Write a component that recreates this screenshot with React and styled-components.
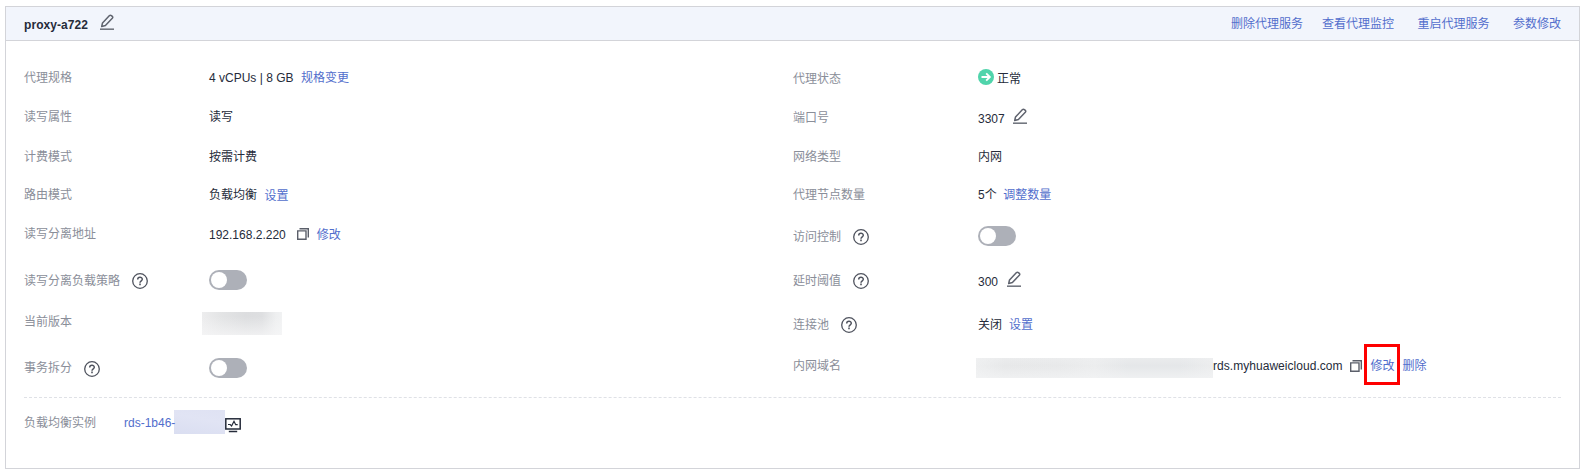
import React from "react";
import styled, { createGlobalStyle } from "styled-components";

const GlobalStyle = createGlobalStyle`
  * { box-sizing: border-box; }
  body {
    margin: 0;
    background: #fff;
    color: #252b3a;
    font: 12px/16px "Liberation Sans", "Noto Sans CJK SC", sans-serif;
  }
`;

const Page = styled.main`
  padding: 6px 5px 0;
`;

const Panel = styled.section`
  width: 1575px;
  height: 463px;
  border: 1px solid #d3d4d9;
  background: #fff;
`;

const Header = styled.header`
  display: flex;
  align-items: center;
  justify-content: space-between;
  height: 34px;
  padding: 0 18px;
  background: #f2f5fc;
  border-bottom: 1px solid #d3d4d9;
`;

const TitleGroup = styled.div`
  display: flex;
  align-items: center;
  gap: 12px;
`;

const Title = styled.h1`
  margin: 2px 0 0;
  font-size: 12px;
  line-height: 16px;
  font-weight: 700;
  letter-spacing: 0.07px;
`;

const Actions = styled.nav`
  display: flex;
`;

const Link = styled.a`
  position: relative;
  flex: none;
  color: #526ecc;
  white-space: nowrap;
  cursor: pointer;
  margin-left: ${(p) => p.$left ?? 0}px;
  margin-top: ${(p) => (p.$shift ?? 0) * 2}px;
`;

const Status = styled.span`
  margin-left: 3px;
`;

const Domain = styled.span`
  letter-spacing: 0.04px;
`;

const Details = styled.div`
  display: grid;
  grid-template-columns: 769px 1fr;
  height: 357px;
  margin: 0 18px;
  border-bottom: 1px dashed #dfe1e6;
`;

const Column = styled.div`
  display: flex;
  flex-direction: column;
`;

const Row = styled.div`
  display: flex;
  align-items: center;
  height: 24px;
  margin-top: ${(p) => p.$gap}px;
`;

const Label = styled.div`
  display: flex;
  align-items: center;
  flex: none;
  width: ${(p) => p.$width ?? 185}px;
  color: #8a8e99;
  white-space: nowrap;
`;

const Value = styled.div`
  display: flex;
  align-items: center;
  white-space: nowrap;
  margin-top: ${(p) => (p.$shift ?? 0) * 2}px;
`;

const Icon = styled.svg`
  display: block;
  flex: none;
  margin-left: ${(p) => p.$left ?? 0}px;
  margin-top: ${(p) => (p.$shift ?? 0) * 2}px;
`;

const Switch = styled.button.attrs({ type: "button", role: "switch", "aria-checked": false })`
  display: flex;
  align-items: center;
  width: 38px;
  height: 20px;
  margin-top: ${(p) => (p.$shift ?? -1) * 2}px;
  padding: 0 2px;
  border: 0;
  border-radius: 10px;
  background: #adb0b8;

  &::before {
    content: "";
    width: 16px;
    height: 16px;
    border-radius: 50%;
    background: #fff;
  }
`;

const VersionMask = styled.div`
  width: 80px;
  height: 23px;
  margin: 3px 0 0 -7px;
  background:
    linear-gradient(to bottom, transparent 20%, rgba(246, 246, 247, 0.75)),
    linear-gradient(to right, #ededee, #e3e4e5 25%, #dcdddf 55%, #dedfe1 75%, #eeeff0 92%, #f1f2f3);
`;

const DomainMask = styled.div`
  flex: none;
  width: 237px;
  height: 20px;
  margin: 4px 0 0 -2px;
  background:
    linear-gradient(to bottom, rgba(241, 242, 243, 0.4), transparent 40%, rgba(243, 244, 245, 0.7)),
    linear-gradient(to right, #eeeff0, #e7e8e9 12%, #e8e9ea 35%, #ecedee 50%, #e5e7e9 64%, #e5e7e9 86%, #ecedee);
`;

const InstanceMask = styled.div`
  flex: none;
  width: 51px;
  height: 24px;
  margin: -2px 0 0 -1px;
  background: linear-gradient(10deg, #dadef1, #e1e4f4 60%, #dfe2f3);
`;

const Highlight = styled.span`
  position: absolute;
  left: -7px;
  top: -14px;
  width: 36px;
  height: 41px;
  border: 3px solid #fe0000;
  pointer-events: none;
`;

const Footer = styled.div`
  padding: 0 18px;
`;

const EditIcon = (props) => (
  <Icon width="15" height="17" viewBox="0 0 15 17" fill="none" stroke="#5f636e" strokeWidth="1.5" {...props}>
    <path d="M1.7 12.5 2.5 9 9.5 1.6Q10.4.8 11.4 1.6L12.3 2.4Q13.2 3.3 12.3 4.3L5.4 11.5Z" strokeLinejoin="round" />
    <path d="M0 15.2H14" stroke="#737780" strokeWidth="1.6" />
  </Icon>
);

const HelpIcon = (props) => (
  <Icon width="16" height="16" viewBox="0 0 16 16" fill="none" stroke="#4f535e" strokeWidth="1.3" {...props}>
    <circle cx="8" cy="8" r="7.3" />
    <path d="M5.7 6.4C5.7 3.5 10.3 3.5 10.3 6.3 10.3 7.8 8 7.8 8 9.7" strokeWidth="1.5" />
    <path d="M8 10.6V12.2" strokeWidth="1.6" />
  </Icon>
);

const CopyIcon = (props) => (
  <Icon width="12" height="12" viewBox="0 0 12 12" fill="none" stroke="#5b5f6a" strokeWidth="1.4" {...props}>
    <path d="M.7 2.9H9V11.2H.7Z" />
    <path d="M2.5.7H11.3V9.5" />
  </Icon>
);

const RunningIcon = (props) => (
  <Icon width="16" height="16" viewBox="0 0 16 16" fill="none" {...props}>
    <circle cx="8" cy="8" r="8" fill="#50d4ab" />
    <path d="M3.5 8H11.5M8.2 4.3 11.9 8 8.2 11.7" stroke="#fff" strokeWidth="1.8" />
  </Icon>
);

const MonitorIcon = (props) => (
  <Icon width="16" height="15" viewBox="0 0 16 15" fill="none" stroke="#252b3a" strokeWidth="1.5" {...props}>
    <rect x=".8" y=".8" width="14.4" height="10.2" />
    <path d="M3 6.5H5.2L6.6 8 9 3.3 10.7 6.7H12.7" strokeWidth="1.2" />
    <path d="M3.8 13.5H12.2" strokeWidth="1.5" />
  </Icon>
);

export default function App() {
  return (
    <>
      <GlobalStyle />
      <Page>
        <Panel>
          <Header>
            <TitleGroup>
              <Title>proxy-a722</Title>
              <EditIcon $shift={-1} />
            </TitleGroup>
            <Actions>
              <Link>删除代理服务</Link>
              <Link $left={19}>查看代理监控</Link>
              <Link $left={23.5}>重启代理服务</Link>
              <Link $left={23.5}>参数修改</Link>
            </Actions>
          </Header>

          <Details>
            <Column>
              <Row $gap={25}>
                <Label>代理规格</Label>
                <Value>4 vCPUs | 8 GB<Link $left={7.4}>规格变更</Link></Value>
              </Row>
              <Row $gap={15}>
                <Label>读写属性</Label>
                <Value>读写</Value>
              </Row>
              <Row $gap={16}>
                <Label>计费模式</Label>
                <Value>按需计费</Value>
              </Row>
              <Row $gap={14}>
                <Label>路由模式</Label>
                <Value>负载均衡<Link $left={7.4} $shift={1}>设置</Link></Value>
              </Row>
              <Row $gap={15}>
                <Label>读写分离地址</Label>
                <Value $shift={1}>
                  192.168.2.220<CopyIcon $left={11} $shift={-1} /><Link $left={8}>修改</Link>
                </Value>
              </Row>
              <Row $gap={23}>
                <Label>读写分离负载策略<HelpIcon $left={12} /></Label>
                <Switch />
              </Row>
              <Row $gap={17}>
                <Label>当前版本</Label>
                <VersionMask />
              </Row>
              <Row $gap={22}>
                <Label>事务拆分<HelpIcon $left={12} $shift={1} /></Label>
                <Switch $shift={0} />
              </Row>
            </Column>

            <Column>
              <Row $gap={26}>
                <Label>代理状态</Label>
                <Value><RunningIcon $shift={-2} /><Status>正常</Status></Value>
              </Row>
              <Row $gap={15}>
                <Label>端口号</Label>
                <Value $shift={1}>3307<EditIcon $left={8.6} $shift={-3} /></Value>
              </Row>
              <Row $gap={15}>
                <Label>网络类型</Label>
                <Value>内网</Value>
              </Row>
              <Row $gap={14}>
                <Label>代理节点数量</Label>
                <Value>5个<Link $left={6.6}>调整数量</Link></Value>
              </Row>
              <Row $gap={18}>
                <Label>访问控制<HelpIcon $left={11.6} /></Label>
                <Switch />
              </Row>
              <Row $gap={20}>
                <Label>延时阈值<HelpIcon $left={11.6} /></Label>
                <Value $shift={1}>300<EditIcon $left={8.6} $shift={-3} /></Value>
              </Row>
              <Row $gap={20}>
                <Label>连接池<HelpIcon $left={11.6} /></Label>
                <Value>关闭<Link $left={7}>设置</Link></Value>
              </Row>
              <Row $gap={17}>
                <Label>内网域名</Label>
                <Value>
                  <DomainMask />
                  <Domain>rds.myhuaweicloud.com</Domain>
                  <CopyIcon $left={7.5} />
                  <Link $left={8.5}>修改<Highlight /></Link>
                  <Link $left={8}>删除</Link>
                </Value>
              </Row>
            </Column>
          </Details>

          <Footer>
            <Row $gap={13}>
              <Label $width={100}>负载均衡实例</Label>
              <Link>rds-1b46-</Link>
              <InstanceMask />
              <MonitorIcon $shift={2} />
            </Row>
          </Footer>
        </Panel>
      </Page>
    </>
  );
}
